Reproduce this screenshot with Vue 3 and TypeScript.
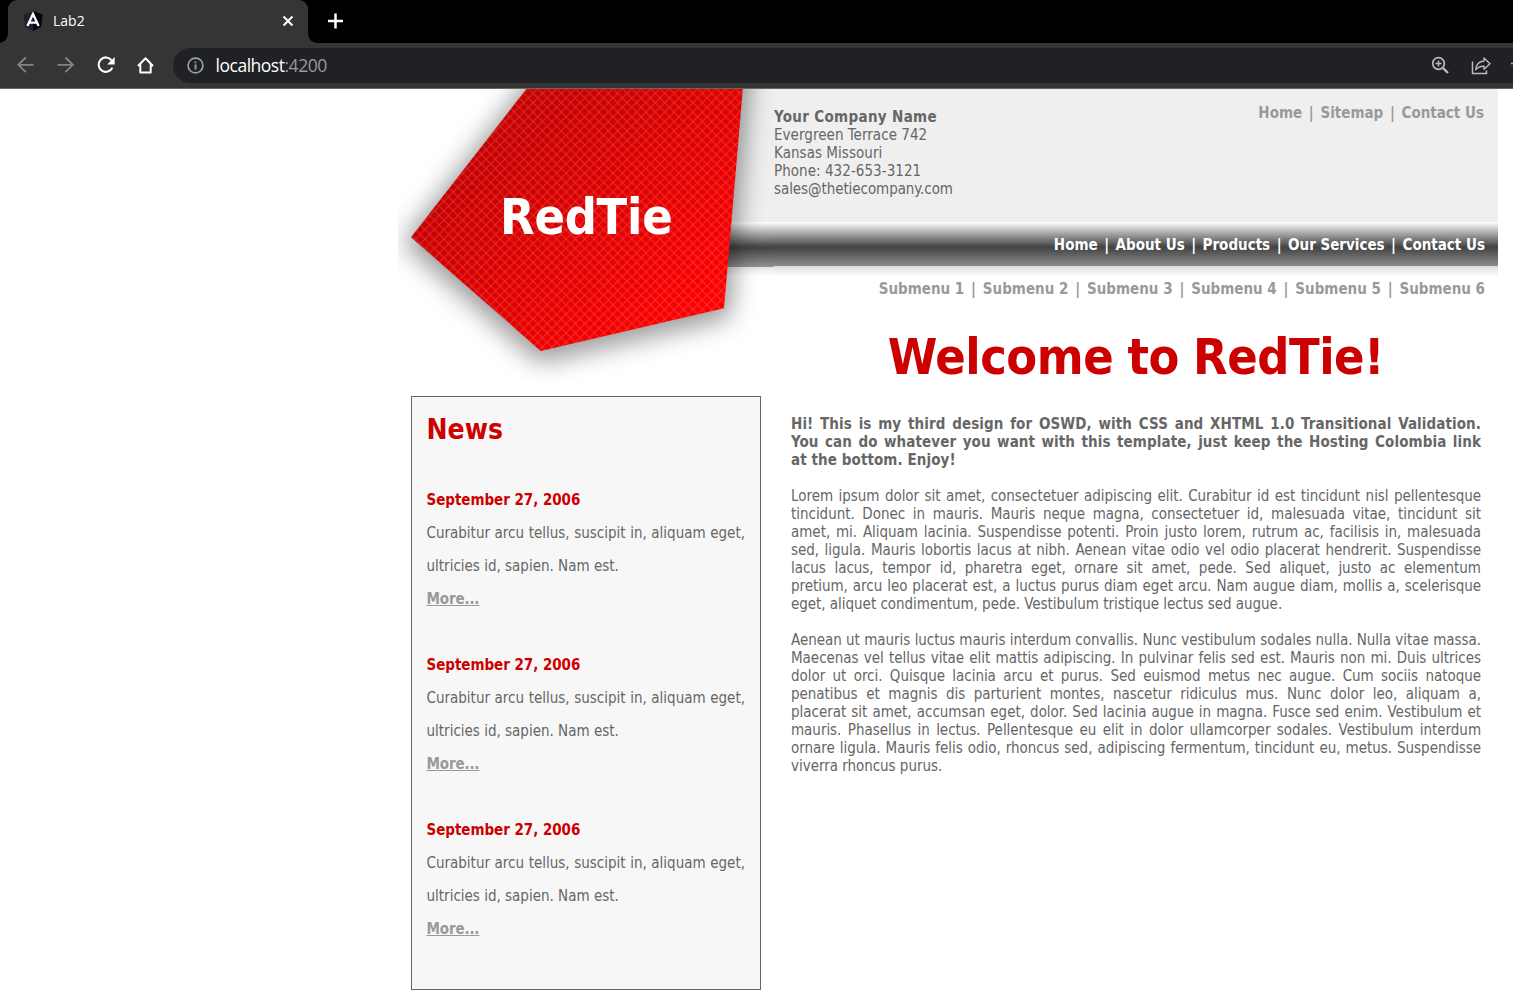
<script setup lang="ts">
const topLinks = ['Home', 'Sitemap', 'Contact Us']
const mainLinks = ['Home', 'About Us', 'Products', 'Our Services', 'Contact Us']
const subLinks = ['Submenu 1', 'Submenu 2', 'Submenu 3', 'Submenu 4', 'Submenu 5', 'Submenu 6']

const news = [1, 2, 3].map((id) => ({
  id,
  date: 'September 27, 2006',
  lines: ['Curabitur arcu tellus, suscipit in, aliquam eget,', 'ultricies id, sapien. Nam est.'],
}))

const intro = [
  'Hi! This is my third design for OSWD, with CSS and XHTML 1.0 Transitional Validation.',
  'You can do whatever you want with this template, just keep the Hosting Colombia link',
  'at the bottom. Enjoy!',
]

const paragraphs = [
  [
    'Lorem ipsum dolor sit amet, consectetuer adipiscing elit. Curabitur id est tincidunt nisl pellentesque',
    'tincidunt. Donec in mauris. Mauris neque magna, consectetuer id, malesuada vitae, tincidunt sit',
    'amet, mi. Aliquam lacinia. Suspendisse potenti. Proin justo lorem, rutrum ac, facilisis in, malesuada',
    'sed, ligula. Mauris lobortis lacus at nibh. Aenean vitae odio vel odio placerat hendrerit. Suspendisse',
    'lacus lacus, tempor id, pharetra eget, ornare sit amet, pede. Sed aliquet, justo ac elementum',
    'pretium, arcu leo placerat est, a luctus purus diam eget arcu. Nam augue diam, mollis a, scelerisque',
    'eget, aliquet condimentum, pede. Vestibulum tristique lectus sed augue.',
  ],
  [
    'Aenean ut mauris luctus mauris interdum convallis. Nunc vestibulum sodales nulla. Nulla vitae massa.',
    'Maecenas vel tellus vitae elit mattis adipiscing. In pulvinar felis sed est. Mauris non mi. Duis ultrices',
    'dolor ut orci. Quisque lacinia arcu et purus. Sed euismod metus nec augue. Cum sociis natoque',
    'penatibus et magnis dis parturient montes, nascetur ridiculus mus. Nunc dolor leo, aliquam a,',
    'placerat sit amet, accumsan eget, dolor. Sed lacinia augue in magna. Fusce sed enim. Vestibulum et',
    'mauris. Phasellus in lectus. Pellentesque eu elit in dolor ullamcorper sodales. Vestibulum interdum',
    'ornare ligula. Mauris felis odio, rhoncus sed, adipiscing fermentum, tincidunt eu, metus. Suspendisse',
    'viverra rhoncus purus.',
  ],
]
</script>

<template>
  <div class="window">
    <header class="chrome">
      <div class="tabstrip">
        <div class="tab">
          <svg class="favicon" width="22" height="22" viewBox="0 0 22 22">
            <path d="M11 1 L20.500 4.400 L19 17 L11 21 L3 17 L1.500 4.400 Z" fill="#1d2230" />
            <path d="M11 1 L20.500 4.400 L19 17 L11 21 Z" fill="#04060e" />
            <path d="M5.400 16 L11 4 L16.600 16 M7.600 12.600 H14.400" fill="none" stroke="#fff" stroke-width="2.300" />
          </svg>
          <span class="tab-title">Lab2</span>
          <svg class="close" width="12" height="12" viewBox="0 0 12 12">
            <path d="M1.500 1.500 L10.500 10.500 M10.500 1.500 L1.500 10.500" stroke="#fff" stroke-width="2" />
          </svg>
        </div>
        <svg class="newtab" width="16" height="16" viewBox="0 0 16 16">
          <path d="M7.500 0.500 V15.500 M0 8 H15" stroke="#fff" stroke-width="2.500" />
        </svg>
      </div>
      <div class="toolbar">
        <svg class="buttons" width="173" height="45" viewBox="0 43 173 45" fill="none">
          <path d="M33.500 64.800 H18.500 M25.800 57.500 L18.300 64.800 L25.800 72.200" stroke="#858585" stroke-width="1.800" />
          <path d="M57.500 64.800 H72.500 M65.400 57.500 L72.900 64.800 L65.400 72.200" stroke="#858585" stroke-width="1.800" />
          <path d="M111.600 60.300 A7.200 7.200 0 1 0 112.400 67.600" stroke="#fff" stroke-width="2.100" />
          <path d="M114.700 57 V64.500 H107.200 Z" fill="#fff" />
          <path d="M138 66 L145.500 58.300 L153 66 M140.300 64.500 V72.400 H150.700 V64.500" stroke="#fff" stroke-width="2" stroke-linejoin="round" />
        </svg>
        <div class="omnibox">
          <svg class="info" width="18" height="18" viewBox="0 0 18 18" fill="none">
            <circle cx="8.500" cy="8.500" r="7.400" stroke="#9aa0a6" stroke-width="1.700" />
            <path d="M8.500 7.500 V12.500 M8.500 4.400 V6.200" stroke="#9aa0a6" stroke-width="1.900" />
          </svg>
          <span class="url">localhost<span class="port">:4200</span></span>
          <svg class="actions" width="90" height="35" viewBox="1423 48 90 35" fill="none" stroke="#b8babd">
            <circle cx="1438.500" cy="63.500" r="5.800" stroke-width="1.700" />
            <path d="M1443 68 L1448 73" stroke-width="2.400" />
            <path d="M1435.500 63.500 H1441.500 M1438.500 60.500 V66.500" stroke-width="1.500" />
            <path d="M1472.500 61.500 V73.500 H1486.500 V70.500" stroke-width="1.500" />
            <path d="M1475.800 69.800 C1476.200 64 1479.500 61.300 1484 61 V58 L1490 63.800 L1484 69.300 V66.300 C1480.500 66 1478 67 1475.800 69.800 Z" stroke-width="1.400" stroke-linejoin="round" />
            <path d="M1511 63.500 H1513" stroke-width="1.500" />
          </svg>
        </div>
      </div>
    </header>

    <div class="page">
      <aside class="side">
        <div class="logo">
          <svg width="376" height="293" viewBox="398 89 376 293">
            <defs>
              <linearGradient id="red" gradientUnits="userSpaceOnUse" x1="520" y1="130" x2="690" y2="330">
                <stop offset="0" stop-color="#c80000" />
                <stop offset="1" stop-color="#ff0000" />
              </linearGradient>
              <linearGradient id="bar" x1="0" y1="0" x2="0" y2="1">
                <stop offset="0" stop-color="#fff" />
                <stop offset="0.300" stop-color="#999" />
                <stop offset="0.540" stop-color="#484848" />
                <stop offset="0.580" stop-color="#444" />
                <stop offset="1" stop-color="#929292" />
              </linearGradient>
              <linearGradient id="fade" x1="0" y1="0" x2="0" y2="1">
                <stop offset="0" stop-color="#e4e4e4" />
                <stop offset="1" stop-color="#fff" />
              </linearGradient>
              <pattern id="mesh" width="9.400" height="9.400" patternUnits="userSpaceOnUse" x="2" y="4">
                <path d="M-1 -1 L10.400 10.400 M10.400 -1 L-1 10.400" stroke="#fff" stroke-opacity="0.180" stroke-width="1.100" />
              </pattern>
              <filter id="soft" filterUnits="userSpaceOnUse" x="340" y="-60" width="520" height="520">
                <feGaussianBlur stdDeviation="13" />
              </filter>
            </defs>
            <rect x="640" y="89" width="134" height="133" fill="#efefef" />
            <rect x="640" y="222" width="134" height="45" fill="url(#bar)" />
            <rect x="640" y="267" width="134" height="9" fill="url(#fade)" />
            <path d="M604 -11 L411 237 L541 351 L724 308 L751 -11 Z" transform="translate(0 5)" fill="#000" fill-opacity="0.370" stroke="#000" stroke-opacity="0.370" stroke-width="10" stroke-linejoin="round" filter="url(#soft)" />
            <path d="M526.300 89 L411 237.300 L540.700 351 L724 308.300 L742.800 89 Z" fill="url(#red)" />
            <path d="M526.300 89 L411 237.300 L540.700 351 L724 308.300 L742.800 89 Z" fill="url(#mesh)" />
          </svg>
          <h2 class="brand">RedTie</h2>
        </div>
        <section class="news">
          <h3>News</h3>
          <article v-for="n in news" :key="n.id">
            <h4>{{ n.date }}</h4>
            <p v-for="(l, i) in n.lines" :key="i" :class="{ full: i === 0 }">{{ l }}</p>
            <a class="more">More...</a>
          </article>
        </section>
      </aside>

      <main class="main">
        <div class="top">
          <address>
            <strong>Your Company Name</strong>
            <span>Evergreen Terrace 742</span>
            <span>Kansas Missouri</span>
            <span>Phone: 432-653-3121</span>
            <span class="mail">sales@thetiecompany.com</span>
          </address>
          <nav class="menu top-menu">
            <template v-for="(l, i) in topLinks" :key="l"><i v-if="i">|</i><a>{{ l }}</a></template>
          </nav>
        </div>
        <nav class="menu main-menu">
          <template v-for="(l, i) in mainLinks" :key="l"><i v-if="i">|</i><a>{{ l }}</a></template>
        </nav>
        <nav class="menu sub-menu">
          <template v-for="(l, i) in subLinks" :key="l"><i v-if="i">|</i><a>{{ l }}</a></template>
        </nav>
        <div class="content">
          <h1>Welcome to RedTie!</h1>
          <div class="para intro">
            <p v-for="(l, i) in intro" :key="i" :class="{ full: i < intro.length - 1 }">{{ l }}</p>
          </div>
          <div v-for="(p, k) in paragraphs" :key="k" class="para">
            <p v-for="(l, i) in p" :key="i" :class="{ full: i < p.length - 1 }">{{ l }}</p>
          </div>
        </div>
      </main>
    </div>
  </div>
</template>

<style>
body {
  margin: 0;
  background: #fff;
  overflow: hidden;
}
</style>

<style scoped>
.window {
  width: 1513px;
  height: 1000px;
  overflow: hidden;
  background: #fff;
  font: 15px/18px "DejaVu Sans Condensed", "DejaVu Sans", sans-serif;
  color: #666;
}
h1, h2, h3, h4, p {
  margin: 0;
}
svg {
  display: block;
  flex: none;
}

.chrome {
  height: 88px;
  background: #353535;
  border-bottom: 1px solid #666;
}
.tabstrip {
  display: flex;
  align-items: flex-start;
  height: 43px;
  background: #000;
}
.tab {
  position: relative;
  display: flex;
  align-items: center;
  box-sizing: border-box;
  width: 300px;
  height: 43px;
  margin-left: 8px;
  padding: 0 14px 2px 14px;
  border-radius: 9px 9px 0 0;
  background: #353535;
}
.tab::before,
.tab::after {
  content: "";
  position: absolute;
  bottom: 0;
  width: 9px;
  height: 9px;
}
.tab::before {
  left: -9px;
  background: radial-gradient(circle at 0 0, #000 8.500px, #353535 9px);
}
.tab::after {
  right: -9px;
  background: radial-gradient(circle at 100% 0, #000 8.500px, #353535 9px);
}
.tab-title {
  flex: 1;
  margin-left: 9px;
  font: 14px/20px "Open Sans", sans-serif;
  color: #fff;
}
.newtab {
  margin: 13px 0 0 20px;
}
.toolbar {
  display: flex;
  align-items: flex-start;
  height: 45px;
}
.omnibox {
  display: flex;
  align-items: center;
  flex: 1;
  height: 35px;
  margin-top: 5px;
  padding-left: 14px;
  border-radius: 18px 0 0 18px;
  background: #202124;
}
.url {
  flex: 1;
  margin: 0 0 1px 10.500px;
  font: 17.500px/24px "Open Sans", sans-serif;
  letter-spacing: -0.480px;
  color: #fff;
}
.port {
  color: #9a9a9a;
}

.page {
  display: flex;
  width: 1100px;
  margin-left: 398px;
}
.side {
  width: 376px;
}
.logo {
  position: relative;
  height: 293px;
}
.brand {
  position: absolute;
  left: 102px;
  top: 99px;
  font-size: 50px;
  line-height: 58px;
  letter-spacing: -0.250px;
  color: #fff;
}
.news {
  box-sizing: border-box;
  width: 350px;
  height: 594px;
  margin: 14px 0 0 13px;
  padding: 0 15px 0 14.500px;
  border: 1px solid #666;
  background: #f7f7f7;
}
.news h3 {
  height: 86.500px;
  font-size: 28px;
  line-height: 65px;
  color: #c00;
}
.news article {
  margin-bottom: 33px;
  line-height: 33px;
}
.news h4 {
  font-size: 15px;
  letter-spacing: -0.040px;
  color: #c00;
}
.news p {
  white-space: nowrap;
}
.more {
  display: block;
  font-weight: bold;
  letter-spacing: -0.150px;
  text-decoration: underline;
  text-decoration-thickness: 1px;
  text-underline-offset: 1px;
  color: #999;
}
.full {
  text-align: justify;
  text-align-last: justify;
}

.main {
  width: 724px;
}
.top {
  display: flex;
  justify-content: space-between;
  height: 133px;
  background: #efefef;
}
address {
  display: flex;
  flex-direction: column;
  padding-top: 19px;
  font-style: normal;
  letter-spacing: 0.050px;
}
address strong {
  letter-spacing: 0.330px;
}
address .mail {
  letter-spacing: -0.070px;
}
.menu {
  display: flex;
  justify-content: flex-end;
  font-weight: bold;
  white-space: nowrap;
}
.menu i {
  width: 18.300px;
  font-style: normal;
  text-align: center;
}
.top-menu {
  padding: 15px 14px 0 0;
  color: #999;
}
.main-menu {
  box-sizing: border-box;
  height: 44px;
  padding: 14px 13px 0 0;
  color: #fff;
  background: linear-gradient(#fff 0, #999 30%, #484848 55%, #444 58%, #8c8c8c 100%);
}
.main-menu i {
  width: 17.900px;
}
.sub-menu {
  box-sizing: border-box;
  height: 62px;
  padding: 14px 13px 0 0;
  color: #999;
  background: linear-gradient(#dcdcdc, #fff 10px);
}
.sub-menu i {
  width: 18.650px;
}
.content {
  padding: 0 17px;
}
h1 {
  height: 87px;
  font-size: 50px;
  line-height: 58px;
  letter-spacing: -0.480px;
  word-spacing: -1px;
  text-align: center;
  color: #c00;
}
.para {
  margin-bottom: 18px;
  letter-spacing: -0.030px;
  white-space: nowrap;
}
.intro {
  font-weight: bold;
  letter-spacing: 0.090px;
}
</style>
